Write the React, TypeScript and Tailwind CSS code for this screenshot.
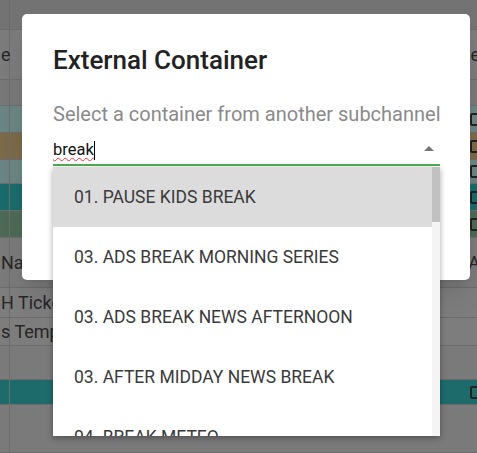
import { useState } from "react";

const rows = [
    { h: "h-[30px]", bg: "bg-[#737373]", left: "", right: "", check: false },
    { h: "h-[50px]", bg: "bg-[#7b7b7b]", left: "e", right: "e", check: false },
    { h: "h-[26px]", bg: "bg-[#787878]", left: "", right: "", check: false },
    { h: "h-[27px]", bg: "bg-[#6a8583]", left: "", right: "", check: true },
    { h: "h-[27px]", bg: "bg-[#7a6a48]", left: "", right: "", check: true },
    { h: "h-[24px]", bg: "bg-[#6a8583]", left: "", right: "", check: true },
    { h: "h-[27px]", bg: "bg-[#1a6b6b]", left: "", right: "", check: true },
    { h: "h-[27px]", bg: "bg-[#4d6a56]", left: "", right: "", check: true },
    { h: "h-[50px]", bg: "bg-[#7a7a7a]", left: "Na", right: "A", check: false },
    { h: "h-[30px]", bg: "bg-[#7d7d7d]", left: "H Ticket", right: "", check: false },
    { h: "h-[28px]", bg: "bg-[#7d7d7d]", left: "s Temp", right: "", check: false },
    { h: "h-[34px]", bg: "bg-[#7a7a7a]", left: "", right: "", check: false },
    { h: "h-[25px]", bg: "bg-[#1d6b6b]", left: "", right: "", check: true },
    { h: "h-[48px]", bg: "bg-[#7a7a7a]", left: "", right: "", check: false },
];

const options = [
    "01. PAUSE KIDS BREAK",
    "03. ADS BREAK MORNING SERIES",
    "03. ADS BREAK NEWS AFTERNOON",
    "03. AFTER MIDDAY NEWS BREAK",
    "04. BREAK METEO",
];

function BackgroundTable() {
    return (
        <div className="flex flex-col w-full">
            {rows.map((r, i) => (
                <div
                    key={i}
                    className={`flex flex-row items-center justify-between ${r.h} ${r.bg} border-b border-[#6c6c6c]`}
                >
                    <div className="flex items-center h-full pl-[1px] border-r border-[#6c6c6c] w-[10px] overflow-visible whitespace-nowrap text-[18px] text-[#262626]">
                        {r.left}
                    </div>
                    <div className="flex items-center justify-end h-full text-[18px] text-[#262626]">
                        {r.check ? (
                            <div className="w-[13px] h-[13px] border-2 border-[#222] rounded-[2px] mr-[-6px]" />
                        ) : (
                            <span className="mr-[-3px]">{r.right}</span>
                        )}
                    </div>
                </div>
            ))}
        </div>
    );
}

export default function App() {
    const [query] = useState("break");

    return (
        <div className="relative w-[477px] h-[453px] overflow-hidden font-['Roboto',sans-serif]">
            <BackgroundTable />

            <div className="absolute left-[22px] top-[14px] w-[448px] h-[266px] bg-white rounded-[5px] shadow-xl flex flex-col pl-[31px] pr-[30px]">
                <h2 className="mt-[30px] text-[26px] leading-[32px] font-medium text-[#222]">
                    External Container
                </h2>
                <div className="mt-[25px] text-[20px] leading-[26px] text-[#8a8a8a] whitespace-nowrap">
                    Select a container from another subchannel
                </div>
                <div className="mt-[8px] flex flex-row items-center justify-between h-[31px] border-b-2 border-[#4caf50]">
                    <span className="text-[16.5px] leading-[22px] text-[#111] underline decoration-wavy decoration-red-500 decoration-1 underline-offset-2">
                        {query}
                        <span className="inline-block w-[1px] h-[19px] bg-black align-middle" />
                    </span>
                    <svg width="10" height="7" viewBox="0 0 10 7" className="mr-[6px] mt-[-2px]">
                        <path d="M0 6 L5 1 L10 6 Z" fill="#757575" />
                    </svg>
                </div>
            </div>

            <div className="absolute left-[53px] top-[167px] w-[387px] h-[269px] bg-white shadow-[0_2px_6px_rgba(0,0,0,0.35)] flex flex-row overflow-hidden">
                <div className="flex flex-col flex-1">
                    {options.map((o, i) => (
                        <div
                            key={o}
                            className={`flex items-center shrink-0 h-[60px] pl-[21px] text-[17.5px] text-[#3a3a3a] ${
                                i === 0 ? "bg-[#dcdcdc]" : ""
                            }`}
                        >
                            {o}
                        </div>
                    ))}
                </div>
                <div className="w-[8px] bg-[#f4f4f4] flex flex-col">
                    <div className="h-[55px] bg-[#c1c1c1]" />
                </div>
            </div>
        </div>
    );
}
